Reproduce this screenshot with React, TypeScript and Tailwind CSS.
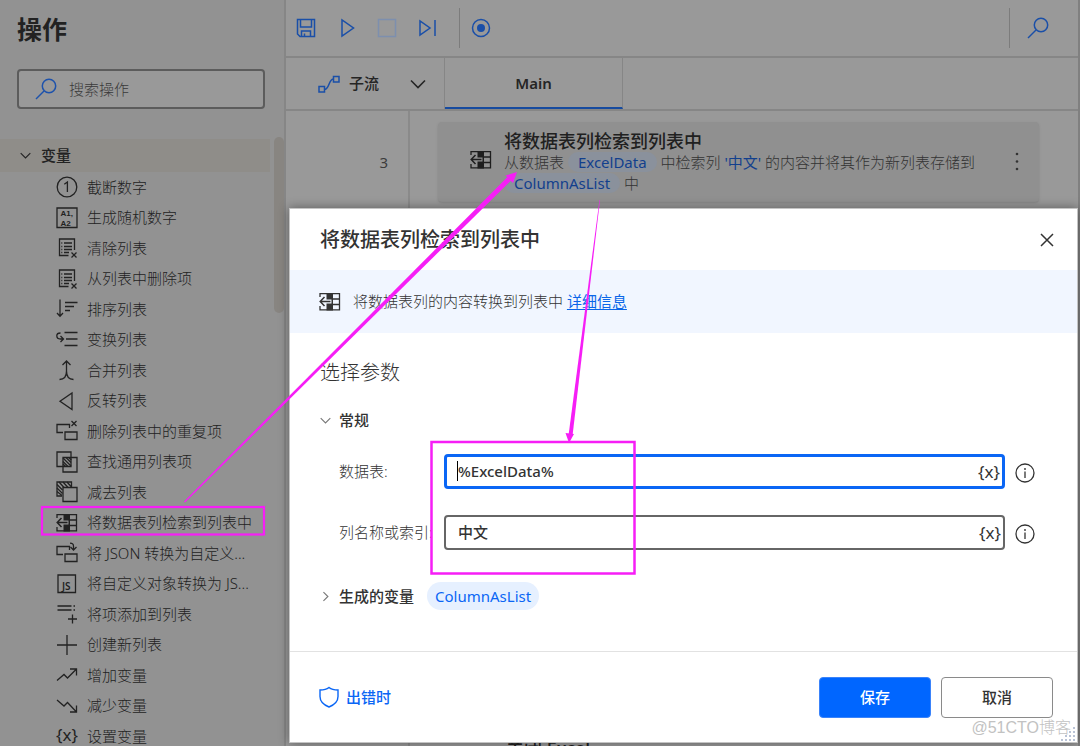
import React, { useState } from "react";

type IconName =
  | "truncate" | "random" | "clear" | "remove" | "sort" | "shuffle" | "merge" | "reverse"
  | "dedupe" | "common" | "subtract" | "column" | "fromJson" | "toJson" | "append" | "create"
  | "increase" | "decrease" | "variable";

const actions: { icon: IconName; label: string }[] = [
  { icon: "truncate", label: "截断数字" },
  { icon: "random", label: "生成随机数字" },
  { icon: "clear", label: "清除列表" },
  { icon: "remove", label: "从列表中删除项" },
  { icon: "sort", label: "排序列表" },
  { icon: "shuffle", label: "变换列表" },
  { icon: "merge", label: "合并列表" },
  { icon: "reverse", label: "反转列表" },
  { icon: "dedupe", label: "删除列表中的重复项" },
  { icon: "common", label: "查找通用列表项" },
  { icon: "subtract", label: "减去列表" },
  { icon: "column", label: "将数据表列检索到列表中" },
  { icon: "fromJson", label: "将 JSON 转换为自定义..." },
  { icon: "toJson", label: "将自定义对象转换为 JS..." },
  { icon: "append", label: "将项添加到列表" },
  { icon: "create", label: "创建新列表" },
  { icon: "increase", label: "增加变量" },
  { icon: "decrease", label: "减少变量" },
  { icon: "variable", label: "设置变量" },
];

const Glyph = ({ name }: { name: IconName }) => {
  switch (name) {
    case "truncate":
      return (
        <>
          <circle cx="11" cy="11" r="9.8" />
          <path d="M8.3 8.3 11.4 6v10" />
        </>
      );
    case "random":
      return (
        <>
          <path d="M1 1h20v19.5H1z" />
          <g className="font-['Liberation_Sans',sans-serif] text-[8px] font-bold" fill="currentColor" stroke="none">
            <text x="4.6" y="9.2">A1,</text>
            <text x="4.6" y="18.6">A2</text>
          </g>
        </>
      );
    case "clear":
    case "remove":
      return (
        <>
          <path d="M12.5 18.5H3.5V2H18.5v11" />
          <path d="M8 6h8M8 9.5h8M8 12.5h8M8 15.5h5M5.3 6h1M5.3 9.5h1M5.3 12.5h1M5.3 15.5h1" />
          <path d="m15.5 15.5 5 5M20.5 15.5l-5 5" />
        </>
      );
    case "sort":
      return <path d="M4 1.5v16.5M1 15l3 3.2L7 15M9 4.5h12.5M9 8.5h9M9 12.5h5" />;
    case "shuffle":
      return <path d="M8.5 3.5h13M10 10h11.5M8.5 16.5h13M4.5 4C1.5 4 .8 5.5 .8 6.8 .8 9 2.5 10 4.5 10H7.5M4.5 7 7.5 10l-3 3" />;
    case "merge":
      return <path d="M3.5 20.5c5 0 7-4 7-8.500V2M17.5 20.5c-5 0-7-4-7-8.500M6.500 6l4-4 4 4" />;
    case "reverse":
      return <path d="M16 3v16.5L4 11.2z" />;
    case "dedupe":
      return (
        <>
          <path d="M7 12.5H1V4.5h12.5V8M9 12h12v7.5H9z" />
          <path d="m15.5 1 5 5M20.5 1l-5 5" />
        </>
      );
    case "common":
      return (
        <>
          <path d="M1 1h14v14.5H1zM7 6.5h14V21H7z" />
          <path d="m7 7 8 8M10 6.5l5 5M7 10.5l5 5M12.8 6.5l2.5 2.5M7 13l2.5 2.5" />
        </>
      );
    case "subtract":
      return (
        <>
          <path d="M6 15H1V1h14.5v5M7 6.5h14V20.5H7z" />
          <path d="m1 3.5 5.5 5.5M1 7l5.5 5.5M1 10.5l5 4M3 1l5 5.5M7 1l5 5.5M11 1l4.5 5" />
        </>
      );
    case "column":
      return (
        <>
          <path d="M1 6V2.700h19.500v16.100H1V15" />
          <path d="M7.500 2h6.500v17.500H7.500z" fill="currentColor" stroke="none" />
          <path d="M14 8h6.500M14 13.500h6.500" />
          <path d="M6 10.500h6.500" stroke="var(--hole)" strokeWidth="4" />
          <path d="M1 10.500h10.500M5.500 6 1.200 10.500 5.500 15" strokeWidth="1.500" />
        </>
      );
    case "fromJson":
      return (
        <>
          <path d="M7 12.5H1V4.5h12.5V8M9 12h12v7.5H9z" />
          <path d="M14 1.2c3 0 3.5 1 3.5 3V7.5M14.5 5l3 3 3-3" />
        </>
      );
    case "toJson":
      return (
        <>
          <path d="M2 2h17.5v17.5H2z" />
          <text x="6" y="17" fontSize="10" fontWeight="600" fill="currentColor" stroke="none">JS</text>
        </>
      );
    case "append":
      return <path d="M1.5 3h14M1.5 7h14M17.5 3h1.5M17.5 7h1.5M16.5 11.5v9M12 16h9" />;
    case "create":
      return <path d="M11 1v20M1 11h20" />;
    case "increase":
      return <path d="m1 16.5 7-6 3.5 3.5L20.5 5M14 5h6.5v6.5" />;
    case "decrease":
      return <path d="m1 5 7 6 3.5-3.5L20.5 17M14 17h6.5v-6.5" />;
    case "variable":
      return <text x="0" y="16" fontSize="17" fontWeight="400" fill="currentColor" stroke="none">{"{x}"}</text>;
  }
};

const ActionIcon = ({ name }: { name: IconName }) => (
  <svg className="size-[22px] shrink-0" viewBox="0 0 22 22" fill="none" stroke="currentColor" strokeWidth="1.3" aria-hidden="true">
    <Glyph name={name} />
  </svg>
);

const SearchIcon = () => (
  <svg className="size-[22px] shrink-0" viewBox="0 0 22 22" fill="none" stroke="currentColor" strokeWidth="1.5" aria-hidden="true">
    <circle cx="14" cy="8" r="6.7" />
    <path d="M9 13 1 21" />
  </svg>
);

const Chevron = ({ className, right }: { className: string; right?: boolean }) => (
  <svg className={className} viewBox="0 0 16 16" fill="none" stroke="currentColor" strokeWidth="1.6" aria-hidden="true">
    <path d={right ? "M5 1.5 11.5 8 5 14.5" : "M1 4.5 8 11.5 15 4.5"} />
  </svg>
);

const Sidebar = () => (
  <aside className="relative flex w-[286px] shrink-0 flex-col border-r-2 border-[#868686] bg-[#929292] text-[#222]">
    <h1 className="pt-[11px] pl-[17px] text-[25px] leading-9 font-bold">操作</h1>
    <label className="mt-[22px] mr-[19px] ml-[17px] flex h-10 shrink-0 items-center gap-3 rounded-sm border-2 border-[#5c5c5c] bg-[#999999] pl-4 text-[#1d52ac]">
      <SearchIcon />
      <input aria-label="搜索操作" placeholder="搜索操作" className="min-w-0 flex-1 bg-transparent text-[15px] font-light outline-none placeholder:text-[#3a3a3a]" />
    </label>
    <button className="mt-[30px] mr-[14px] flex h-[33px] shrink-0 items-center gap-[10px] bg-[#8f8d89] pl-5 text-[15px] font-medium">
      <Chevron className="size-[11px]" />
      变量
    </button>
    <ul className="flex min-h-0 flex-1 flex-col justify-between pt-[5px] [--hole:#929292]">
      {actions.map((action) => (
        <li key={action.label} className="h-5 shrink-0">
          <button className="flex h-5 w-full items-center gap-[9px] pl-14 text-left text-[15px] font-light whitespace-nowrap">
            <ActionIcon name={action.icon} />
            {action.label}
          </button>
        </li>
      ))}
    </ul>
    <div className="absolute top-[137px] right-0 h-44 w-[10px] rounded-full bg-[#888581]" />
  </aside>
);

const Toolbar = () => (
  <div className="flex h-[58px] shrink-0 items-center border-b-2 border-[#868686] pl-[10px] text-[#1a4fa8]">
    <div className="flex items-center">
      <button aria-label="保存流">
        <svg className="size-5" viewBox="0 0 20 20" fill="none" stroke="currentColor" strokeWidth="1.5">
          <path d="M1.5 1.5h17v17H4l-2.5-2.5zM4.5 1.5v7.5h11V1.5M5.5 18.5V13h9v5.5M8.5 18.5v-3" />
        </svg>
      </button>
      <button aria-label="运行" className="ml-[22px]">
        <svg className="size-5" viewBox="0 0 20 20" fill="none" stroke="currentColor" strokeWidth="1.5">
          <path d="M4 2v16l11.5-8z" />
        </svg>
      </button>
      <button aria-label="停止" disabled className="ml-[19px] text-[#7d8fae]">
        <svg className="size-5" viewBox="0 0 20 20" fill="none" stroke="currentColor" strokeWidth="1.5">
          <path d="M1.5 1.5h17v17h-17z" />
        </svg>
      </button>
      <button aria-label="运行下一个操作" className="ml-[21px]">
        <svg className="size-5" viewBox="0 0 20 20" fill="none" stroke="currentColor" strokeWidth="1.5">
          <path d="M2 3v14l10-7zM17 2v16" />
        </svg>
      </button>
    </div>
    <div className="ml-[21px] h-10 w-px bg-[#7c7c7c]" />
    <button aria-label="记录器" className="ml-[11px]">
      <svg className="size-5" viewBox="0 0 20 20" fill="none" stroke="currentColor" strokeWidth="1.5">
        <circle cx="10" cy="10" r="8.5" />
        <circle cx="10" cy="10" r="4" fill="currentColor" stroke="none" />
      </svg>
    </button>
    <div className="ml-auto h-10 w-px bg-[#7c7c7c]" />
    <button aria-label="在流中搜索" className="mr-[29px] ml-[17px]">
      <SearchIcon />
    </button>
  </div>
);

const Tabs = () => (
  <div className="flex h-[53px] shrink-0 border-b-2 border-[#868686] text-[15px] text-[#252525]">
    <button className="flex w-[159px] items-center border-r border-[#868686] pl-8 font-medium">
      <svg className="size-[22px] text-[#1a4fa8]" viewBox="0 0 22 22" fill="none" stroke="currentColor" strokeWidth="1.5" aria-hidden="true">
        <path d="M1 13.5h5.5v5.5H1zM15.5 3.5H21V9h-5.5zM6.5 16.5c5 0 4-10.5 9-10.5" />
      </svg>
      <span className="ml-[9px]">子流</span>
      <Chevron className="ml-[31px] size-4" />
    </button>
    <button className="w-[178px] border-r border-b-2 border-r-[#868686] border-b-[#174b9f] pt-[2px] font-semibold">Main</button>
  </div>
);

const Variable = ({ children }: { children: React.ReactNode }) => (
  <span className="rounded-full bg-[#8a919c] px-[10px] font-normal text-[#123f8d]">{children}</span>
);

const Workspace = () => (
  <div className="flex min-h-0 flex-1">
    <div className="flex w-[124px] shrink-0 justify-end border-r-2 border-[#8a8a8a] pt-10 pr-5 text-[15px] text-[#3c3c3c]">3</div>
    <div className="flex flex-1 flex-col gap-[531px] pt-[11px] pr-[39px] pl-7">
      <div className="flex h-20 shrink-0 rounded bg-[#909090] pl-8 shadow-sm [--hole:#909090]">
        <div className="mt-[27px] text-[#1f1f1f]">
          <ActionIcon name="column" />
        </div>
        <div className="ml-3 flex-1 pt-2 text-[15px] leading-[21px] font-light text-[#333]">
          <h2 className="text-lg leading-[22px] font-medium text-[#202020]">将数据表列检索到列表中</h2>
          <p>
            从数据表 <Variable>ExcelData</Variable> 中检索列 <span className="font-normal text-[#123f8d]">'中文'</span> 的内容并将其作为新列表存储到
            <br />
            <Variable>ColumnAsList</Variable> 中
          </p>
        </div>
        <button aria-label="更多操作" className="mr-3 text-[#333]">
          <svg className="size-5" viewBox="0 0 20 20" fill="currentColor">
            <circle cx="10" cy="2" r="1.3" />
            <circle cx="10" cy="9.5" r="1.3" />
            <circle cx="10" cy="17" r="1.3" />
          </svg>
        </button>
      </div>
      <div className="shrink-0 pt-1 pl-[68px] text-lg leading-[22px] font-medium text-[#202020]">关闭 Excel</div>
    </div>
  </div>
);

const Field = ({ id, label, value, active, onChange }: { id: string; label: string; value: string; active?: boolean; onChange: (v: string) => void }) => (
  <div className="flex h-[35px] items-center">
    <label htmlFor={id} className="w-[105px] shrink-0 text-[15px] font-light whitespace-nowrap">{label}</label>
    <div className={`relative flex h-[35px] min-w-0 flex-1 items-center rounded bg-white pr-[2px] ${active ? "border-3 border-[#0a66f5] pl-[11px]" : "border-2 border-[#666] pl-3"}`}>
      {active && <span className="absolute top-1 left-[10px] h-5 w-px bg-black" />}
      <input id={id} value={value} onChange={(e) => onChange(e.target.value)} className="min-w-0 flex-1 bg-transparent text-[15px] font-medium outline-none" />
      <button aria-label="选择变量" className="text-[17px] leading-5">{"{x}"}</button>
    </div>
    <button aria-label="信息" className="ml-[10px] pt-[2px]">
      <svg className="size-5" viewBox="0 0 20 20" fill="none" stroke="currentColor" strokeWidth="1.3">
        <circle cx="10" cy="10" r="9" />
        <path d="M10 8.5V15" />
        <circle cx="10" cy="6" r=".9" fill="currentColor" stroke="none" />
      </svg>
    </button>
  </div>
);

const ActionDialog = () => {
  const [table, setTable] = useState("%ExcelData%");
  const [column, setColumn] = useState("中文");
  return (
    <div role="dialog" aria-labelledby="dialog-title" className="absolute top-[208px] right-[2px] bottom-[3px] left-[289px] flex flex-col border border-[#c4c4c4] bg-white text-[#333] shadow-[0_0_10px_rgba(0,0,0,0.4)]">
      <header className="flex h-[61px] shrink-0 items-center justify-between pr-[23px] pl-[30px]">
        <h2 id="dialog-title" className="text-xl font-medium">将数据表列检索到列表中</h2>
        <button aria-label="关闭">
          <svg className="size-[14px]" viewBox="0 0 14 14" fill="none" stroke="currentColor" strokeWidth="1.5">
            <path d="m1 1 12 12M13 1 1 13" />
          </svg>
        </button>
      </header>
      <div className="flex h-[63px] shrink-0 items-center bg-[#f1f6ff] pl-[29px] text-[15px] font-light [--hole:#f1f6ff]">
        <ActionIcon name="column" />
        <p className="ml-3">
          将数据表列的内容转换到列表中 <a href="#" className="font-normal text-[#0a66e8] underline underline-offset-2">详细信息</a>
        </p>
      </div>
      <div className="flex-1 pr-[42px] pl-[30px]">
        <h3 className="pt-[26px] text-xl leading-7 font-light">选择参数</h3>
        <button className="mt-[19px] flex h-7 items-center gap-2 text-[15px] font-medium">
          <Chevron className="size-[11px] text-[#777]" />
          常规
        </button>
        <div className="mt-5 flex flex-col gap-[26px] pl-[19px]">
          <Field id="table" label="数据表:" value={table} active onChange={setTable} />
          <Field id="column" label="列名称或索引:" value={column} onChange={setColumn} />
        </div>
        <div className="mt-8 flex h-7 items-center text-[15px]">
          <button className="flex items-center gap-2 font-medium">
            <Chevron className="size-[11px] text-[#777]" right />
            生成的变量
          </button>
          <button className="ml-[13px] h-7 rounded-full bg-[#e6f0ff] px-2 text-[#0a66f5]">ColumnAsList</button>
        </div>
      </div>
      <footer className="flex h-[91px] shrink-0 items-center gap-[10px] border-t border-[#e2e2e2] pr-6 pl-[28px] text-[15px] font-medium">
        <button className="mr-auto flex items-center gap-[6px] text-[#0a66f5]">
          <svg className="size-[22px]" viewBox="0 0 22 22" fill="none" stroke="currentColor" strokeWidth="1.4" aria-hidden="true">
            <path d="M11 1.5c2.5 2 5.5 2.5 9 2.5v6.5c0 5-4 8.5-9 10.5-5-2-9-5.5-9-10.5V4c3.5 0 6.5-.5 9-2.5z" />
          </svg>
          出错时
        </button>
        <button className="h-[41px] w-28 rounded-sm border border-[#3a83fa] bg-[#0066ff] text-white">保存</button>
        <button className="h-[41px] w-28 rounded-sm border border-[#8a8a8a] bg-white">取消</button>
      </footer>
      <svg className="absolute right-0 bottom-0 size-4 text-[#b9c3d6]" viewBox="0 0 16 16" fill="currentColor" aria-hidden="true">
        <path d="M12 1h2v2h-2zM8 5h2v2H8zM12 5h2v2h-2zM4 9h2v2H4zM8 9h2v2H8zM12 9h2v2h-2zM0 13h2v2H0zM4 13h2v2H4zM8 13h2v2H8zM12 13h2v2h-2z" />
      </svg>
    </div>
  );
};

// Pink boxes and arrows drawn over the whole window
const Annotations = () => (
  <svg className="pointer-events-none absolute top-0 left-0 h-[746px] w-[1080px]" viewBox="0 0 1080 746" fill="none" aria-hidden="true">
    <g stroke="#f61ef6">
      <rect x="42" y="507" width="222" height="27.5" strokeWidth="2.2" />
      <rect x="431.5" y="442" width="203" height="131.5" strokeWidth="2.5" />
    </g>
    <g fill="#f61ef6">
      <path d="M184 501.500 507.500 177 511 180.500 185 502.500z" />
      <path d="M517 172 513 183 505.500 175.500z" />
      <path d="M599.500 200 600 200 572.500 436 568.500 435.500z" />
      <path d="M569 443 565.500 433 574 434z" />
    </g>
  </svg>
);

export default function App() {
  return (
    <div className="relative flex h-screen overflow-hidden bg-[#999999] font-['Noto_Sans','Noto_Sans_CJK_SC',sans-serif]">
      <Sidebar />
      <main className="flex min-w-0 flex-1 flex-col border-r-2 border-[#808080]">
        <Toolbar />
        <Tabs />
        <Workspace />
      </main>
      <ActionDialog />
      <Annotations />
      <span className="absolute right-[9px] bottom-2 font-['Liberation_Sans','Noto_Sans_CJK_SC',sans-serif] text-base leading-5 font-light text-[#c2c2c2]">@51CTO博客</span>
    </div>
  );
}
